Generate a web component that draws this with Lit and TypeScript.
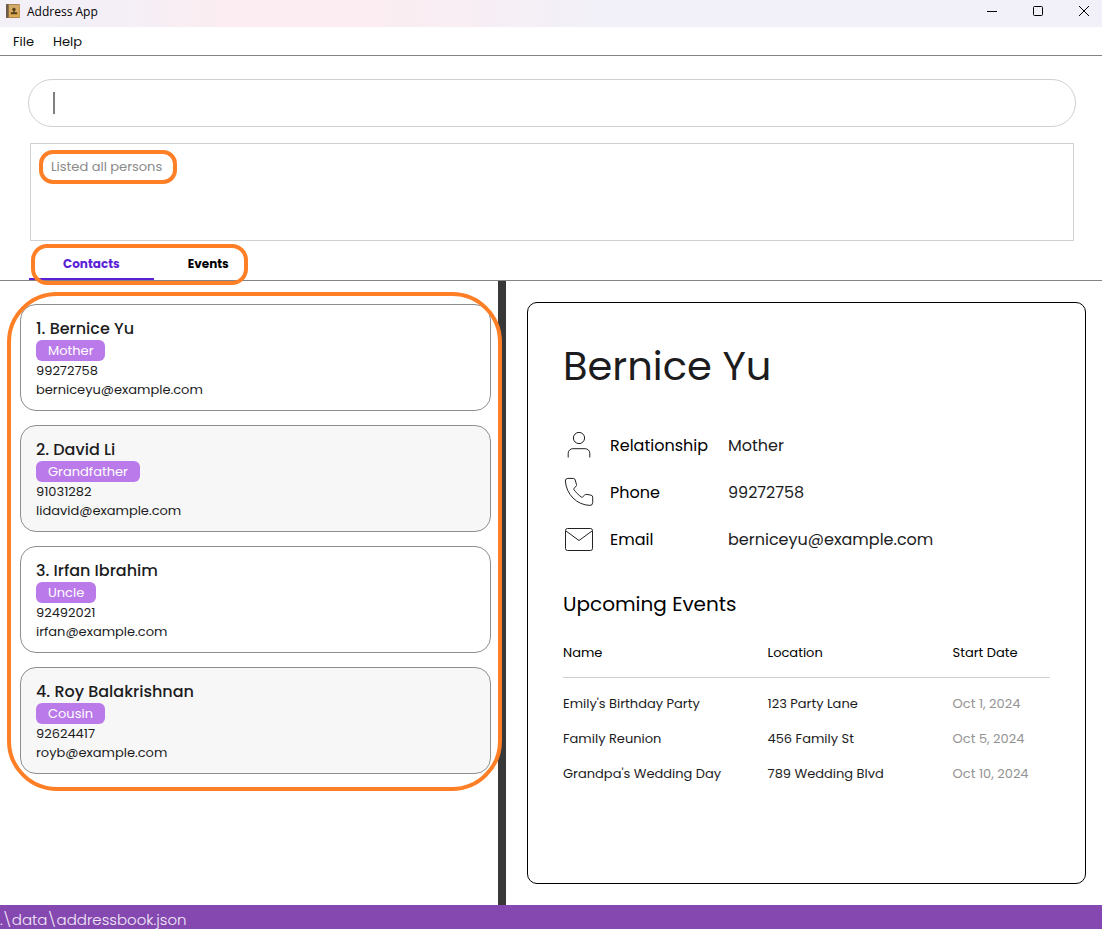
import { LitElement, html, css, svg } from "lit";
import { customElement, state } from "lit/decorators.js";

interface Person {
  name: string;
  relationship: string;
  phone: string;
  email: string;
}

interface EventItem {
  name: string;
  location: string;
  date: string;
}

const PERSONS: Person[] = [
  { name: "Bernice Yu", relationship: "Mother", phone: "99272758", email: "berniceyu@example.com" },
  { name: "David Li", relationship: "Grandfather", phone: "91031282", email: "lidavid@example.com" },
  { name: "Irfan Ibrahim", relationship: "Uncle", phone: "92492021", email: "irfan@example.com" },
  { name: "Roy Balakrishnan", relationship: "Cousin", phone: "92624417", email: "royb@example.com" },
];

const EVENTS: EventItem[] = [
  { name: "Emily's Birthday Party", location: "123 Party Lane", date: "Oct 1, 2024" },
  { name: "Family Reunion", location: "456 Family St", date: "Oct 5, 2024" },
  { name: "Grandpa's Wedding Day", location: "789 Wedding Blvd", date: "Oct 10, 2024" },
];

const personIcon = svg`
  <circle cx="16" cy="8" r="5.6" />
  <path d="M5.2 27.500v-4.200a4.600 4.600 0 0 1 4.600-4.600h12.400a4.600 4.600 0 0 1 4.600 4.600v4.200" />`;
const phoneIcon = svg`
  <path transform="translate(0 -1)" d="M4.800 2.400h5.400a2 2 0 0 1 2 1.600l1.300 4.600a2 2 0 0 1-.6 1.900l-1.900 1.800a1 1 0 0 0-.1 1.200c2 3 4.600 5.500 7.500 7.600a1 1 0 0 0 1.200-.1l2.100-2a2.400 2.400 0 0 1 2.200-.6l4.200.8a2 2 0 0 1 1.600 2v5.400a2.800 2.800 0 0 1-2.900 2.800C14 29 3.200 18.500 2.400 5a2.500 2.500 0 0 1 2.400-2.600z" />`;
const mailIcon = svg`
  <rect x="2.500" y="4.500" width="27" height="22" rx="2" />
  <path d="M3 7l13 9.500L29 7" />`;

@customElement("app-root")
export class AppRoot extends LitElement {
  @state() private selected = 0;
  @state() private tab = "Contacts";

  static styles = css`
    :host {
      display: flex;
      flex-direction: column;
      min-height: 100vh;
      background: #fff;
      color: #1c1c1e;
      font-family: Poppins, Inter, "Open Sans", sans-serif;
      font-size: 13px;
      line-height: 19px;
    }
    * { box-sizing: border-box; }
    button, input {
      font: inherit;
      color: inherit;
      background: none;
      border: 0;
      margin: 0;
      padding: 0;
    }
    h1, h2, ol, dl, dd, dt, p { margin: 0; padding: 0; }
    h1, h2 { font-weight: 400; }
    svg { display: block; }

    .titlebar {
      display: flex;
      height: 27px;
      padding: 0 6px;
      background: linear-gradient(90deg, #f3f0f8 0%, #f4eff7 11%, #fbedf1 20%, #fbedf1 34%, #f8eef4 42%, #f2f0f8 54%, #f2f0f8 100%);
      color: #000;
    }
    .app-icon { margin-top: 4px; }
    .titlebar-name {
      flex: 1;
      padding: 4px 6px;
      font-family: "Open Sans", sans-serif;
      font-size: 12px;
      line-height: 16px;
    }
    .window-buttons { display: flex; gap: 22px; }
    .window-button { display: grid; place-items: center; width: 24px; height: 22px; }

    .menubar {
      display: flex;
      gap: 1px;
      height: 29px;
      padding: 0 4px;
      border-bottom: 1px solid #848484;
    }
    .menu { padding: 0 9px; color: #111; }

    .command { position: relative; margin: 23px 26px 0 28px; }
    .command-input {
      display: block;
      width: 100%;
      height: 48px;
      padding: 0 24px;
      border: 1px solid #d0d0d0;
      border-radius: 24px;
      outline: none;
      font-size: 16px;
    }
    .caret {
      position: absolute;
      left: 25px;
      top: 13px;
      width: 2px;
      height: 22px;
      background: #808080;
    }

    .result {
      height: 98px;
      margin: 16px 28px 0 30px;
      padding: 13px 20px;
      border: 1px solid #d0d0d0;
      color: #8a8a8a;
    }
    .marked { position: relative; display: inline-block; }
    .marked-outline {
      position: absolute;
      inset: -7px -15px -8px -12px;
      border: 4px solid #ff7f27;
      border-radius: 14px;
      pointer-events: none;
    }

    .tabs { border-bottom: 1px solid #848484; padding-left: 29px; }
    .tab-group { position: relative; display: inline-flex; vertical-align: top; }
    .tab {
      height: 39px;
      padding: 8px 34px 0;
      border-bottom: 2px solid transparent;
      font-size: 12px;
      font-weight: 700;
      color: #000;
      line-height: 29px;
    }
    .tab.active { color: #5b21d6; border-color: #5b21d6; }
    .tabs-outline {
      position: absolute;
      inset: 3px 15px -5px 2px;
      border: 4px solid #ff7f27;
      border-radius: 16px;
      pointer-events: none;
    }

    .split {
      flex: 1;
      display: grid;
      grid-template-columns: 498fr 8px 596fr;
    }
    .divider { background: #383838; }
    .list-pane { padding: 23px 7px 23px 20px; }
    .list {
      position: relative;
      display: flex;
      flex-direction: column;
      gap: 14px;
      list-style: none;
    }
    .list-outline {
      position: absolute;
      inset: -12px -11px -17px -13px;
      border: 4px solid #ff7f27;
      border-radius: 50px;
      pointer-events: none;
    }
    .person {
      display: block;
      width: 100%;
      padding: 13px 15px 11px;
      border: 1px solid #8e8e8e;
      border-radius: 16px;
      background: #fff;
      text-align: left;
    }
    .person.alt { background: #f7f7f7; }
    .person-name { display: block; font-size: 16px; line-height: 22px; font-weight: 500; }
    .person-line { display: block; }
    .tag {
      display: block;
      width: fit-content;
      padding: 0 12px;
      border-radius: 6px;
      background: #bb7aea;
      color: #fff;
      line-height: 21px;
    }

    .detail-pane { display: flex; padding: 21px 16px 21px 21px; }
    .detail {
      flex: 1;
      padding: 35px;
      border: 1px solid #000;
      border-radius: 10px;
    }
    .detail-name { font-size: 40px; line-height: 56px; }
    .fields { margin-top: 28px; color: #000; font-size: 16px; line-height: 24px; }
    .field {
      display: grid;
      grid-template-columns: 32px 103px 1fr;
      column-gap: 15px;
      align-items: center;
      height: 47px;
    }
    .field-value { color: #1c1c1e; }
    .field-icon { fill: none; stroke: #222; stroke-width: 1; stroke-linejoin: round; }
    .events-title { margin-top: 26px; font-size: 20px; line-height: 30px; color: #000; }
    .events {
      width: 100%;
      margin-top: 9px;
      border-collapse: collapse;
      table-layout: fixed;
    }
    .events th, .events td { padding: 8px 0; text-align: left; font-weight: 400; }
    .events th { padding: 15px 0; color: #000; border-bottom: 1px solid #d0d0d0; }
    .events tbody::before { content: ""; display: table-row; height: 8px; }
    .col-name { width: 42%; }
    .col-location { width: 38%; }
    .events .date { color: #939393; }

    .status {
      height: 24px;
      padding-top: 5px;
      background: #8548b0;
      color: #f2eaf8;
      font-size: 15px;
      font-weight: 300;
      overflow: hidden;
    }
  `;

  private renderField(icon: unknown, label: string, value: string) {
    return html`
      <div class="field">
        <svg class="field-icon" width="32" height="32" viewBox="0 0 32 32" aria-hidden="true">${icon}</svg>
        <dt>${label}</dt>
        <dd class="field-value">${value}</dd>
      </div>`;
  }

  render() {
    const person = PERSONS[this.selected];
    return html`
      <header class="titlebar">
        <svg class="app-icon" width="15" height="15" viewBox="0 0 15 15" aria-hidden="true">
          <defs>
            <linearGradient id="cover" x1="0" y1="0" x2="0" y2="1">
              <stop offset="0" stop-color="#d0ab70" />
              <stop offset="1" stop-color="#e0a94c" />
            </linearGradient>
          </defs>
          <rect x="0" y="0" width="14" height="14" rx="1" fill="#a98350" />
          <rect x="3" y="1" width="10.500" height="12" fill="url(#cover)" />
          <rect x="0" y="0" width="2.500" height="14" rx="1" fill="#6b5a4c" />
          <circle cx="8" cy="5.400" r="1.700" fill="#54401f" />
          <path d="M7.300 6.500h1.400v1.700h2.500v2H4.800v-2h2.500z" fill="#54401f" />
        </svg>
        <span class="titlebar-name">Address App</span>
        <div class="window-buttons">
          <button class="window-button" aria-label="Minimize">
            <svg width="12" height="12" viewBox="0 0 12 12"><path d="M1 6.500h10" stroke="#000" /></svg>
          </button>
          <button class="window-button" aria-label="Maximize">
            <svg width="12" height="12" viewBox="0 0 12 12"><rect x="1.500" y="1.500" width="9" height="9" rx="1" fill="none" stroke="#000" /></svg>
          </button>
          <button class="window-button" aria-label="Close">
            <svg width="12" height="12" viewBox="0 0 12 12"><path d="M1 1l10 10M11 1L1 11" stroke="#000" /></svg>
          </button>
        </div>
      </header>

      <nav class="menubar">
        <button class="menu">File</button>
        <button class="menu">Help</button>
      </nav>

      <div class="command">
        <input class="command-input" type="text" aria-label="Command" />
        <span class="caret"></span>
      </div>

      <div class="result">
        <p class="marked">Listed all persons<span class="marked-outline"></span></p>
      </div>

      <div class="tabs">
        <div class="tab-group" role="tablist">
          ${["Contacts", "Events"].map(
            (name) => html`<button
              class="tab ${this.tab === name ? "active" : ""}"
              role="tab"
              aria-selected=${this.tab === name}
              @click=${() => (this.tab = name)}
            >${name}</button>`
          )}
          <span class="tabs-outline"></span>
        </div>
      </div>

      <main class="split">
        <section class="list-pane">
          <ol class="list">
            ${PERSONS.map(
              (p, i) => html`<li>
                <button class="person ${i % 2 ? "alt" : ""}" @click=${() => (this.selected = i)}>
                  <span class="person-name">${i + 1}. ${p.name}</span>
                  <span class="tag">${p.relationship}</span>
                  <span class="person-line">${p.phone}</span>
                  <span class="person-line">${p.email}</span>
                </button>
              </li>`
            )}
            <span class="list-outline" role="presentation"></span>
          </ol>
        </section>
        <div class="divider"></div>
        <section class="detail-pane">
          <article class="detail">
            <h1 class="detail-name">${person.name}</h1>
            <dl class="fields">
              ${this.renderField(personIcon, "Relationship", person.relationship)}
              ${this.renderField(phoneIcon, "Phone", person.phone)}
              ${this.renderField(mailIcon, "Email", person.email)}
            </dl>
            <h2 class="events-title">Upcoming Events</h2>
            <table class="events">
              <colgroup><col class="col-name" /><col class="col-location" /><col /></colgroup>
              <thead>
                <tr><th>Name</th><th>Location</th><th>Start Date</th></tr>
              </thead>
              <tbody>
                ${EVENTS.map(
                  (e) => html`<tr><td>${e.name}</td><td>${e.location}</td><td class="date">${e.date}</td></tr>`
                )}
              </tbody>
            </table>
          </article>
        </section>
      </main>

      <footer class="status">.\\data\\addressbook.json</footer>
    `;
  }
}
